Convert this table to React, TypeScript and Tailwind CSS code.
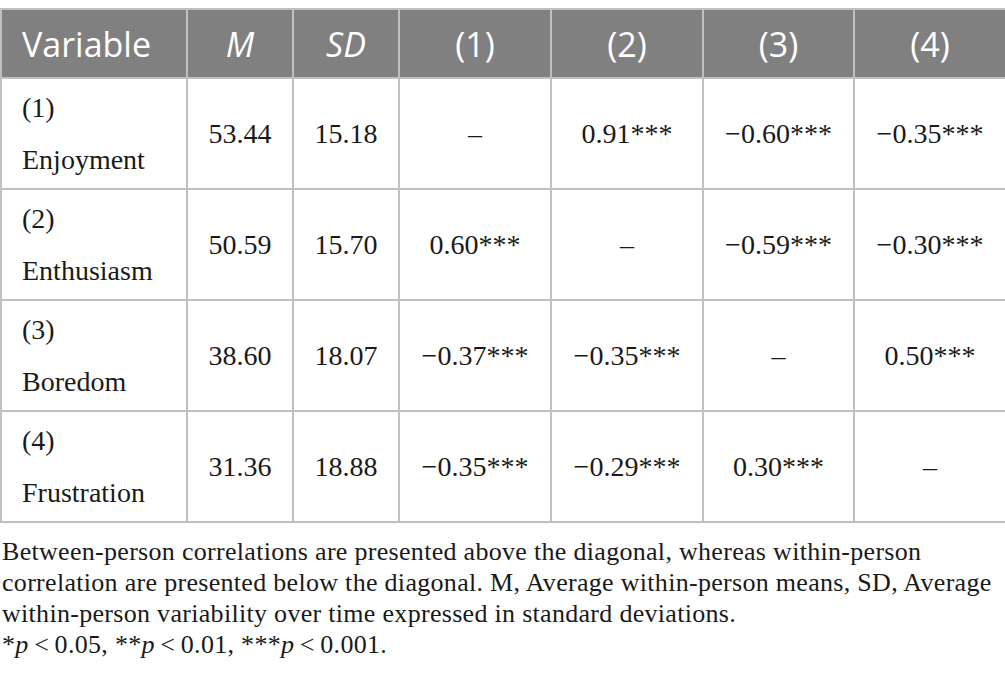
const rows = [
  { n: '(1)', label: 'Enjoyment', m: '53.44', sd: '15.18', c: ['–', '0.91***', '−0.60***', '−0.35***'] },
  { n: '(2)', label: 'Enthusiasm', m: '50.59', sd: '15.70', c: ['0.60***', '–', '−0.59***', '−0.30***'] },
  { n: '(3)', label: 'Boredom', m: '38.60', sd: '18.07', c: ['−0.37***', '−0.35***', '–', '0.50***'] },
  { n: '(4)', label: 'Frustration', m: '31.36', sd: '18.88', c: ['−0.35***', '−0.29***', '0.30***', '–'] },
];

const serif = "font-['Liberation_Serif','Times_New_Roman',serif]";
const cell = 'border-2 border-[#c0c0c0] text-center align-middle';

export default function App() {
  return (
    <div className="w-[1005px] h-[694px] bg-white pt-2 overflow-hidden text-[#1a1a1a]">
      <table className="w-[1005px] border-collapse table-fixed">
        <colgroup>
          <col className="w-[186px]" />
          <col className="w-[106px]" />
          <col className="w-[106px]" />
          <col className="w-[152px]" />
          <col className="w-[152px]" />
          <col className="w-[151px]" />
          <col className="w-[152px]" />
        </colgroup>
        <thead>
          <tr className="h-[69px] bg-[#808080] text-white font-['Open_Sans',sans-serif] text-[34px] leading-none">
            <th className="border-2 border-[#c0c0c0] text-left font-normal pl-[20px]">Variable</th>
            <th className="border-2 border-[#c0c0c0] font-normal italic">M</th>
            <th className="border-2 border-[#c0c0c0] font-normal italic">SD</th>
            <th className="border-2 border-[#c0c0c0] font-normal">(1)</th>
            <th className="border-2 border-[#c0c0c0] font-normal">(2)</th>
            <th className="border-2 border-[#c0c0c0] font-normal">(3)</th>
            <th className="border-2 border-[#c0c0c0] font-normal">(4)</th>
          </tr>
        </thead>
        <tbody className={`${serif} text-[28px]`}>
          {rows.map((r) => (
            <tr key={r.n} className="h-[111px]">
              <td className="border-2 border-[#c0c0c0] text-left pl-[20px] leading-[52px]">
                {r.n}
                <br />
                {r.label}
              </td>
              <td className={cell}>{r.m}</td>
              <td className={cell}>{r.sd}</td>
              {r.c.map((v, i) => (
                <td key={i} className={cell}>
                  {v}
                </td>
              ))}
            </tr>
          ))}
        </tbody>
      </table>

      {/* Footnote */}
      <div className={`${serif} text-[26px] leading-[31px] tracking-[0.3px] pl-[2px] pt-[13px]`}>
        Between-person correlations are presented above the diagonal, whereas within-person
        <br />
        correlation are presented below the diagonal. M, Average within-person means, SD, Average
        <br />
        within-person variability over time expressed in standard deviations.
        <br />
        *<i>p</i>&thinsp;&lt;&thinsp;0.05, **<i>p</i>&thinsp;&lt;&thinsp;0.01, ***<i>p</i>&thinsp;&lt;&thinsp;0.001.
      </div>
    </div>
  );
}
